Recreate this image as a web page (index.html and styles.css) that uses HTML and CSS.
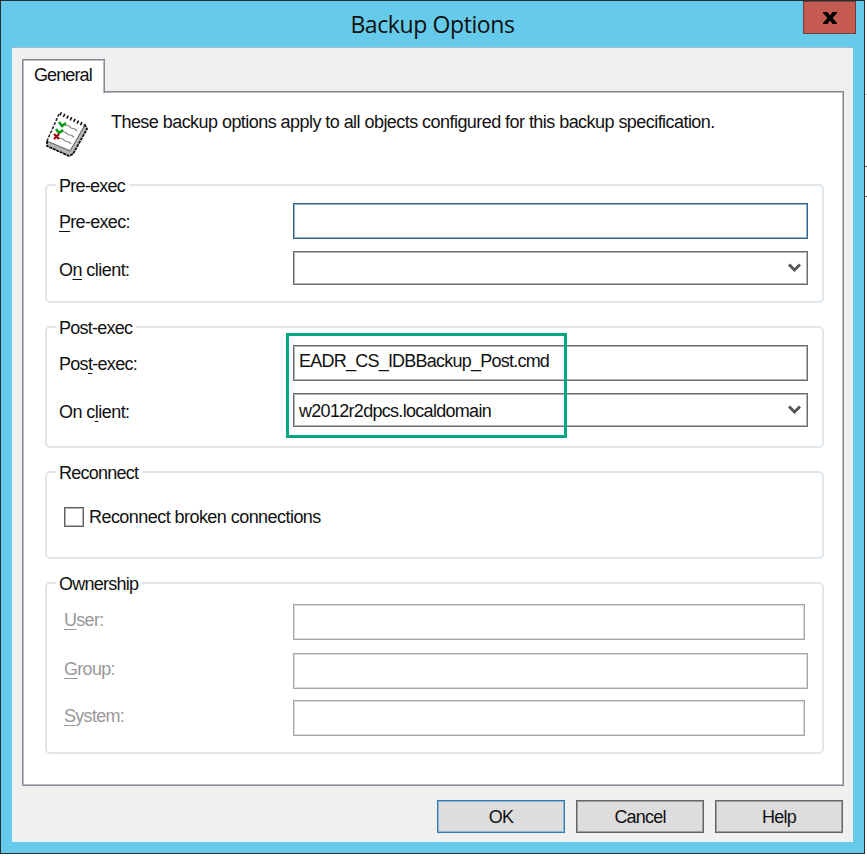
FILE: index.html
```html
<!DOCTYPE html>
<html lang="en">
<head>
<meta charset="utf-8">
<title>Backup Options</title>
<link rel="stylesheet" href="styles.css">
</head>
<body>
<div class="desktop">
  <div class="window">
    <header class="titlebar">
      <h1>Backup Options</h1>
      <button class="close" aria-label="Close"><svg width="16" height="14" viewBox="0 0 16 14"><path d="M1 1h4.500L8 4.400 10.500 1H15v1L10.600 7 15 12v1h-4.500L8 9.600 5.500 13H1v-1L5.400 7 1 2z"/></svg></button>
    </header>
    <main class="client">
      <nav class="tabs"><div class="tab">General</div></nav>
      <section class="page">
        <div class="intro">
          <svg class="pad" width="44" height="48" viewBox="0 0 44 48">
            <path d="M15 3 40 15 41 20 27 45 23 46 2 36V30z" fill="#b5b5b5"/>
            <path d="M15 3 39 15 25 40 2 31z" fill="#fff"/>
            <path d="M14 4 2 31" stroke="#222" stroke-width="1.500" stroke-dasharray="3 1.500"/>
            <path d="M2 31 25 41 39 17" fill="none" stroke="#666" stroke-width="1"/>
            <path d="M2 31V36L24 46 28 44 42 19 40 15" fill="none" stroke="#111" stroke-width="1.800" stroke-dasharray="3 .8"/>
            <path d="M15 3.500 40 15.500" stroke="#111" stroke-width="3.500" stroke-dasharray="1.500 2.300"/>
            <path d="m20 15 4 1 2 2 4 1 2 2M17 21.500l4 1 2 2 4 1 2 2M14 28l4 1 2 2 4 1 2 2" fill="none" stroke="#888" stroke-width="1.200"/>
            <path d="m14 12 3 4 4-3M11 19l3 4 4-3" fill="none" stroke="#079c16" stroke-width="2.500"/>
            <path d="m9 24 5 5m0-5-5 5" stroke="#a5080e" stroke-width="2.300"/>
          </svg>
          <p>These backup options apply to all objects configured for this backup specification.</p>
        </div>
        <section class="group pre">
          <h2>Pre-exec</h2>
          <div class="row"><label><u>P</u>re-exec:</label><div class="field focus"></div></div>
          <div class="row"><label>O<u>n</u> client:</label><div class="field combo"><span></span><svg width="13" height="11" viewBox="0 0 13 11"><path d="M1 1.500 6.500 7 12 1.500"/></svg></div></div>
        </section>
        <section class="group post">
          <h2>Post-exec</h2>
          <div class="row"><label>Pos<u>t</u>-exec:</label><div class="field"><span class="command">EADR_CS_IDBBackup_Post.cmd</span></div></div>
          <div class="row"><label>On c<u>l</u>ient:</label><div class="field combo"><span class="host">w2012r2dpcs.localdomain</span><svg width="13" height="11" viewBox="0 0 13 11"><path d="M1 1.500 6.500 7 12 1.500"/></svg></div></div>
          <div class="highlight"></div>
        </section>
        <section class="group reconnect">
          <h2>Reconnect</h2>
          <label class="check"><i></i><span>Reconnect broken connections</span></label>
        </section>
        <section class="group owner">
          <h2>Ownership</h2>
          <div class="row"><label><u>U</u>ser:</label><div class="field short"></div></div>
          <div class="row"><label><u>G</u>roup:</label><div class="field"></div></div>
          <div class="row"><label><u>S</u>ystem:</label><div class="field short"></div></div>
        </section>
      </section>
      <footer class="actions">
        <button class="default">OK</button><button>Cancel</button><button>Help</button>
      </footer>
    </main>
  </div>
  <div class="behind"><i></i><i></i><i></i></div>
</div>
</body>
</html>
```
FILE: styles.css
```css
* { box-sizing: border-box; }
body { margin: 0; background: #fff; color: #111; font: 18px/24px "Liberation Sans", Arial, sans-serif; letter-spacing: -.55px; overflow: hidden; }
h1, h2, p { margin: 0; font-size: inherit; font-weight: 400; }
button { font: inherit; letter-spacing: inherit; color: inherit; padding: 0; }
.desktop { display: flex; height: 856px; }
.window { width: 865px; height: 854px; border: 1px solid #292d30; padding: 0 11px; background: #66caea; }
.titlebar { height: 46px; display: grid; grid-template-columns: 1fr; position: relative; }
h1 { font: 23px/46px "Open Sans", "Noto Sans", sans-serif; text-align: center; letter-spacing: -.4px; }
.close { position: absolute; right: -3px; top: 0; width: 53px; height: 33px; display: grid; place-items: center; background: #c45a50; border: 1px solid #703d3d; }
.client { height: 795px; background: #f0f0f0; padding: 11px 10px 0 10px; border-top: 1px solid #9dbfd0; }
.tabs { height: 32px; }
.tab { width: 83px; height: 34px; border: 1px solid #858992; box-shadow: inset 1px 1px #b9bbc2, inset -1px 0 #b9bbc2; border-bottom: 0; background: #fff; position: relative; padding: 3px 0 0 11px; letter-spacing: -.9px; }
.page { height: 695px; width: 822px; background: #fff; border: 1px solid #858992; box-shadow: inset 0 0 0 1px #b9bbc2; padding: 1px 19px 0 22px; display: flex; flex-direction: column; }
.intro { height: 91px; display: flex; padding-top: 17px; }
.pad { margin-right: 22px; }
.intro p { white-space: nowrap; }
.group { position: relative; border: 2px solid #dfe7ed; border-radius: 5px; margin-bottom: 23px; flex: none; }
.group h2 { width: max-content; margin: -12px 0 5px 9px; padding: 0 4px 0 3px; background: #fff; letter-spacing: -.75px; }
.pre { height: 119px; }
.post { height: 122px; }
.reconnect { height: 88px; }
.owner { height: 172px; margin: 0; }
.row { display: grid; grid-template-columns: 234px 515px; margin-left: 12px; height: 36px; margin-bottom: 12px; align-items: center; }
.row label { padding-top: 1px; letter-spacing: -.7px; }
.field { height: 36px; border: 1px solid #6c6c6c; box-shadow: inset 0 0 0 1px #b4b4b4; background: #fff; white-space: nowrap; padding: 3px 0 0 5px; }
.focus { border-color: #30628b; box-shadow: inset 0 0 0 1px #92b3ce; }
.command { letter-spacing: -.77px; }
.host { letter-spacing: -.7px; padding-top: 2px; }
.combo { height: 34px; display: flex; align-items: center; justify-content: space-between; padding: 0 6px 0 5px; }
.row:has(.combo) { height: 34px; }
.row:has(.combo) label { padding-top: 4px; letter-spacing: -.55px; }
.combo path { fill: none; stroke: #555; stroke-width: 3; }
.highlight { position: absolute; left: 239px; top: 5px; width: 281px; height: 105px; border: 3px solid #04a784; }
u { text-decoration-thickness: 1px; text-underline-offset: 3px; }
.check { display: flex; align-items: center; margin: 20px 0 0 17px; gap: 5px; }
.check i { width: 20px; height: 20px; border: 1px solid #606060; box-shadow: inset 0 0 0 1px #b4b4b4; }
.owner h2 { margin-bottom: 8px; }
.owner label { color: #999; padding: 0 0 0 5px; margin-top: -4px; }
.owner .field { border-color: #a3a6ab; box-shadow: inset 0 0 0 1px #d8dadd; }
.owner .short { width: 512px; }
.owner .row { margin-bottom: 13px; }
.owner .row + .row { margin-bottom: 11px; }
.actions { display: flex; justify-content: flex-end; gap: 11px; padding-top: 14px; width: 821px; }
.actions button { width: 128px; height: 33px; border: 1px solid #656565; box-shadow: inset 0 0 0 1px #a0a0a0; background: #ddd; letter-spacing: -.8px; }
.actions .default { border-color: #3279af; box-shadow: inset 0 0 0 1px #8db5d3; }
.behind { width: 2px; padding-top: 94px; display: grid; align-content: start; grid-template-rows: 72px 30px 1px; }
.behind i { border-top: 1px solid #555; }
.behind i:first-child { border-color: #ccc; }
```
